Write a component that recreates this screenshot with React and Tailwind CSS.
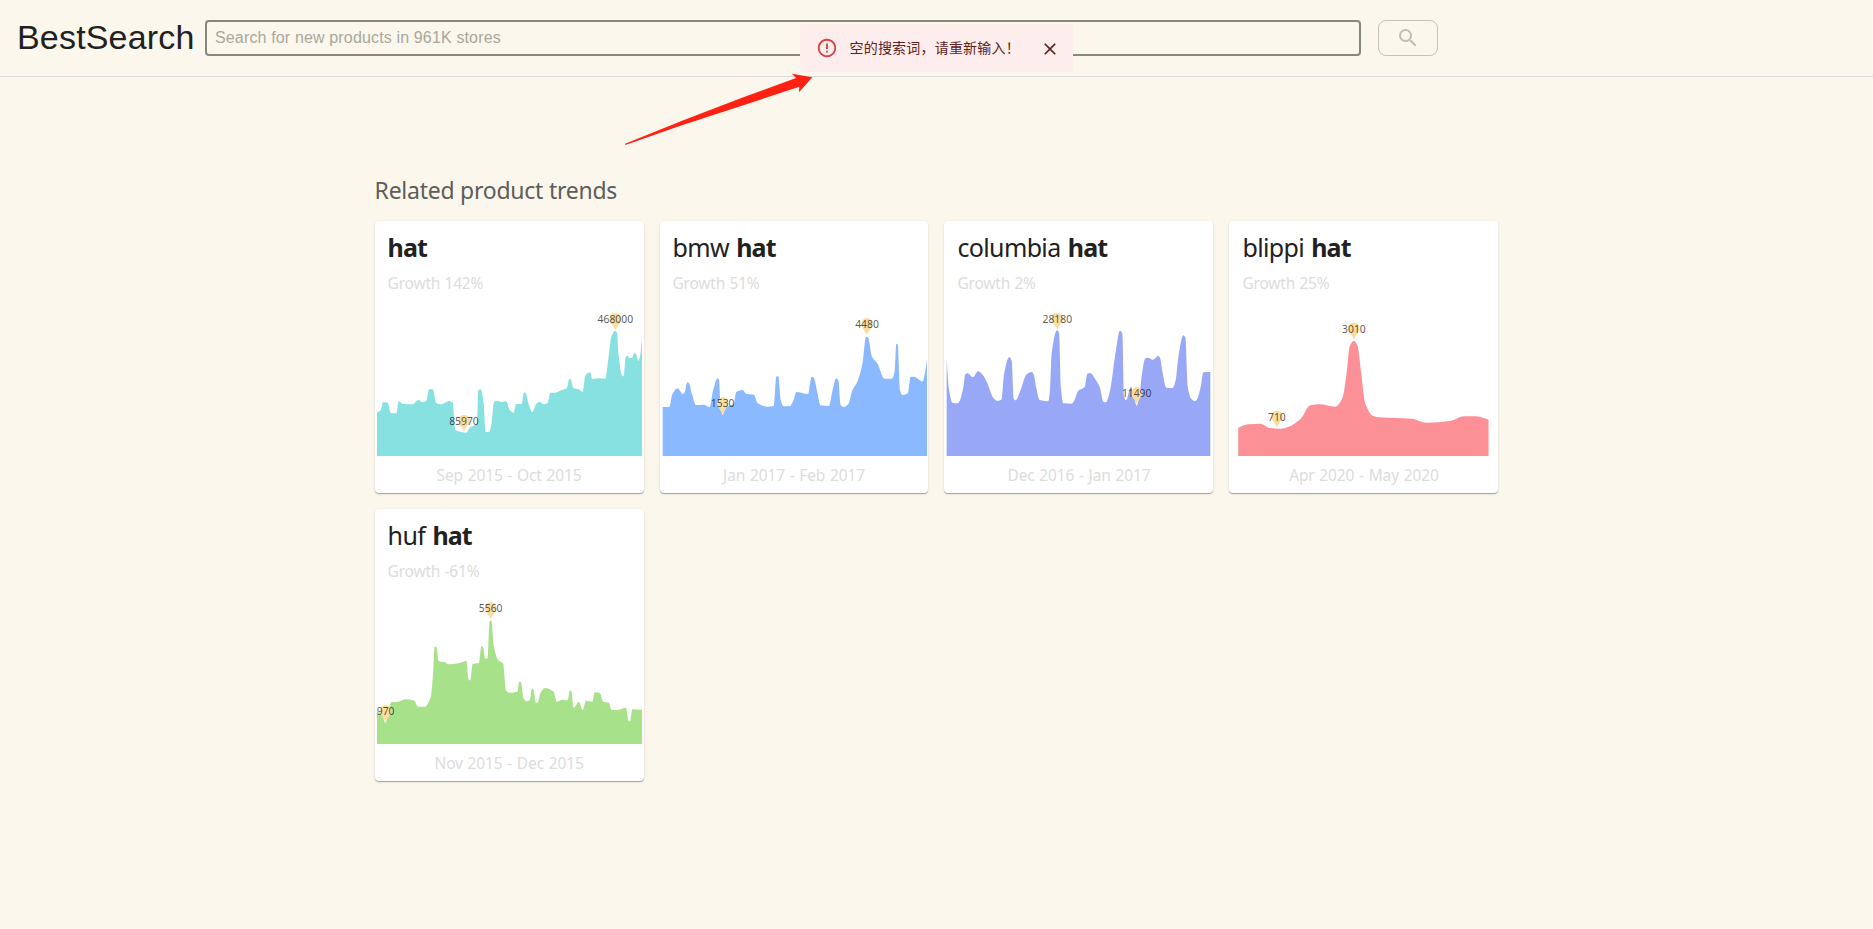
import { MdClose, MdErrorOutline, MdSearch } from "react-icons/md";

// Each chart lists its sampled points, drawn with monotone smoothing down to `base`.
const trends = [
  {
    prefix: "", growth: "142%", period: "Sep 2015 - Oct 2015", fill: "#88e1e1", x: 30, base: 468,
    points: [[36,338],[48,329],[54,307],[68,308],[78,340],[94,340],[101,304],[112,311],[142,313],[160,300],[171,306],[184,303],[192,268],[203,268],[214,309],[228,313],[252,303],[263,308],[271,390],[290,396],[304,398],[315,382],[336,372],[340,270],[347,268],[356,310],[362,396],[372,396],[379,375],[387,306],[397,302],[410,306],[424,304],[434,330],[446,338],[454,312],[470,312],[477,277],[482,279],[491,313],[502,336],[514,311],[525,305],[536,313],[548,308],[556,278],[570,278],[585,272],[605,265],[613,237],[617,238],[625,264],[641,268],[653,276],[661,227],[675,217],[682,237],[705,235],[721,236],[729,185],[739,111],[750,92],[756,98],[761,165],[771,227],[776,229],[782,171],[787,167],[794,174],[802,173],[808,158],[812,160],[820,183],[826,165],[831,118]],
    pins: [[297,397,"85970"],[751,92,"468000"]],
  },
  {
    prefix: "bmw ", growth: "51%", period: "Jan 2017 - Feb 2017", fill: "#8ab9ff", x: 29, base: 738,
    points: [[37,591],[57,591],[66,553],[82,535],[97,552],[103,547],[111,517],[115,518],[125,553],[137,585],[160,584],[178,591],[188,543],[202,505],[206,510],[210,575],[217,615],[226,592],[250,582],[258,546],[276,540],[289,552],[311,554],[322,580],[350,590],[370,588],[378,500],[384,499],[391,570],[400,589],[419,588],[430,569],[438,546],[473,552],[484,500],[490,503],[501,547],[510,586],[536,588],[545,548],[558,505],[564,511],[571,585],[579,591],[594,582],[606,541],[622,513],[637,457],[647,380],[653,382],[665,440],[681,460],[702,506],[725,506],[733,482],[738,401],[742,403],[749,540],[756,555],[772,550],[781,500],[791,500],[817,514],[824,488],[830,447]],
    pins: [[217,615,"1530"],[650,377,"4480"]],
  },
  {
    prefix: "columbia ", growth: "2%", period: "Dec 2016 - Jan 2017", fill: "#98a8f6", x: 27, base: 738,
    points: [[35,450],[42,538],[52,578],[69,580],[75,571],[85,532],[91,493],[98,490],[114,502],[129,484],[143,494],[158,522],[175,564],[188,573],[200,568],[207,493],[223,441],[230,452],[236,566],[242,571],[256,542],[274,494],[290,486],[296,493],[304,535],[314,570],[340,574],[345,540],[350,430],[366,361],[372,368],[378,535],[385,580],[410,581],[417,573],[430,542],[449,531],[457,491],[465,489],[483,511],[495,534],[505,575],[512,577],[525,542],[540,440],[555,362],[562,370],[567,558],[573,571],[588,530],[598,563],[605,587],[614,549],[621,491],[630,446],[639,443],[654,449],[670,438],[675,443],[683,489],[694,533],[713,534],[722,511],[730,442],[745,376],[751,382],[758,528],[767,564],[780,574],[788,564],[798,526],[805,487],[826,486]],
    pins: [[367,361,"28180"],[605,584,"11490"]],
  },
  {
    prefix: "blippi ", growth: "25%", period: "Apr 2020 - May 2020", fill: "#fb9096", x: 27.3, base: 738,
    points: [[55,653],[85,643],[121,641],[150,654],[182,656],[205,651],[242,627],[271,586],[300,583],[346,590],[368,563],[380,490],[389,410],[402,392],[413,408],[424,490],[436,580],[458,617],[480,622],[575,626],[620,638],[694,632],[732,619],[766,619],[806,629]],
    pins: [[171,655,"710"],[402,391,"3010"]],
  },
  {
    prefix: "huf ", growth: "-61%", period: "Nov 2015 - Dec 2015", fill: "#a7e28b", x: 30, base: 732,
    points: [[36,634],[52,645],[61,669],[70,642],[79,606],[100,605],[122,598],[148,602],[159,620],[180,620],[197,592],[204,525],[209,440],[214,440],[221,483],[240,487],[250,493],[280,490],[304,483],[312,541],[316,541],[323,492],[342,489],[349,439],[354,441],[361,477],[368,474],[374,363],[379,362],[387,440],[400,481],[414,490],[423,571],[432,578],[457,575],[463,545],[468,546],[475,593],[486,604],[494,600],[501,566],[505,568],[513,609],[519,606],[526,580],[540,564],[566,575],[575,605],[592,599],[608,601],[615,571],[619,574],[626,623],[642,605],[653,630],[663,602],[682,605],[689,577],[705,579],[714,605],[732,608],[739,629],[755,630],[783,623],[791,664],[795,664],[802,628],[831,629]],
    pins: [[62,668,"970"],[377,359,"5560"]],
  },
];

function areaPath(points, base) {
  const n = points.length;
  const slope = [];
  for (let i = 0; i < n - 1; i++) {
    slope.push((points[i + 1][1] - points[i][1]) / (points[i + 1][0] - points[i][0]));
  }
  const tangent = points.map((_, i) => {
    if (i === 0) return slope[0];
    if (i === n - 1) return slope[n - 2];
    const a = slope[i - 1];
    const b = slope[i];
    return a * b <= 0 ? 0 : (2 * a * b) / (a + b);
  });
  let d = `M${points[0][0]},${base}L${points[0].join(",")}`;
  for (let i = 0; i < n - 1; i++) {
    const [x0, y0] = points[i];
    const [x1, y1] = points[i + 1];
    const h = (x1 - x0) / 3;
    d += `C${x0 + h},${y0 + tangent[i] * h} ${x1 - h},${y1 - tangent[i + 1] * h} ${x1},${y1}`;
  }
  return `${d}L${points[n - 1][0]},${base}Z`;
}

function Pin({ x, y, label }) {
  return (
    <g>
      <path
        d={`M${x},${y}C${x - 2},${y - 14} ${x - 17},${y - 22} ${x - 17},${y - 36}A17,17 0 0 1 ${x + 17},${y - 36}C${x + 17},${y - 22} ${x + 2},${y - 14} ${x},${y}Z`}
        fill="#fbdda0"
      />
      <text x={x} y={y - 23} textAnchor="middle" fontSize="31" fill="#000" fillOpacity="0.68">
        {label}
      </text>
    </g>
  );
}

function TrendCard({ trend }) {
  return (
    <article className="flex h-[272px] flex-col rounded bg-white shadow-[0_1px_0_0_rgba(0,0,0,0.26),0_1px_3px_0_rgba(0,0,0,0.13)]">
      <header className="flex h-20 shrink-0 flex-col px-[13px] pt-[9px]">
        <h3 className="text-[25px] leading-[34px] tracking-[-0.65px] [word-spacing:1.4px] whitespace-pre text-[#212121]">
          {trend.prefix}
          <b className="font-bold tracking-[-0.9px]">hat</b>
        </h3>
        <p className="mt-[7px] text-[15.5px] leading-6 tracking-[-0.2px] [word-spacing:0.5px] text-[#dcdcdc]">Growth {trend.growth}</p>
      </header>
      <svg className="block h-[155px] w-full shrink-0" viewBox={`${trend.x} ${trend.base - 465} 806.85 465`} preserveAspectRatio="none">
        <path d={areaPath(trend.points, trend.base)} fill={trend.fill} />
        {trend.pins.map(([x, y, label]) => (
          <Pin key={label} x={x} y={y} label={label} />
        ))}
      </svg>
      <p className="pt-[7px] text-center text-[15.5px] leading-6 tracking-[-0.12px] [word-spacing:0.8px] text-[#dcdcdc]">{trend.period}</p>
    </article>
  );
}

export default function App() {
  return (
    <div className="relative min-h-[929px] bg-[#fbf7ec] font-['Noto_Sans','Noto_Sans_CJK_SC',sans-serif]">
      <header className="flex h-[77px] items-start border-b border-[#dadade] pt-5 pl-[17px] font-['Liberation_Sans',Arial,sans-serif]">
        <h1 className="-mt-px w-[188px] shrink-0 text-[34px] leading-9 tracking-[0.18px] text-[#212121]">BestSearch</h1>
        <input
          type="text"
          placeholder="Search for new products in 961K stores"
          className="h-9 w-[1156px] shrink-0 rounded border-2 border-[#86887c] bg-transparent px-2 text-base tracking-[0.15px] text-[#212121] placeholder:text-[#a9a79d]"
        />
        <button aria-label="Search" className="ml-[17px] flex h-9 w-[60px] shrink-0 items-start justify-center rounded-lg border border-[#c5c2b7] pt-[5px] text-[#c0bdb2]">
          <MdSearch size={24} />
        </button>
      </header>

      <div role="alert" className="absolute top-6 left-[800px] flex h-12 w-[273px] items-center rounded bg-[#fdeded] pr-[13px] pl-4 text-[#5f2120]">
        <MdErrorOutline size={22} className="shrink-0 text-[#d84343]" />
        <span className="-mt-0.5 ml-[11.5px] text-sm tracking-[0.2px] whitespace-nowrap font-['Noto_Sans_CJK_SC',sans-serif]">空的搜索词，请重新输入！</span>
        <MdClose size={20} className="mt-0.5 ml-auto shrink-0" />
      </div>

      <svg className="absolute top-[60px] left-[610px] h-[100px] w-[220px]" viewBox="0 0 660 300">
        <path d="M45,251L220,181L400,112L558,54L546,41L607,52L567,97L568,80L400,136L220,194L46,255Z" fill="#ff2213" />
      </svg>

      <main className="mx-auto w-[60%] pt-[97px]">
        <h2 className="text-[23px] leading-8 tracking-[-0.25px] text-[#5e5d59]">Related product trends</h2>
        <section className="mt-[15px] grid grid-cols-4 gap-4">
          {trends.map((trend) => (
            <TrendCard key={trend.period} trend={trend} />
          ))}
        </section>
      </main>
    </div>
  );
}
